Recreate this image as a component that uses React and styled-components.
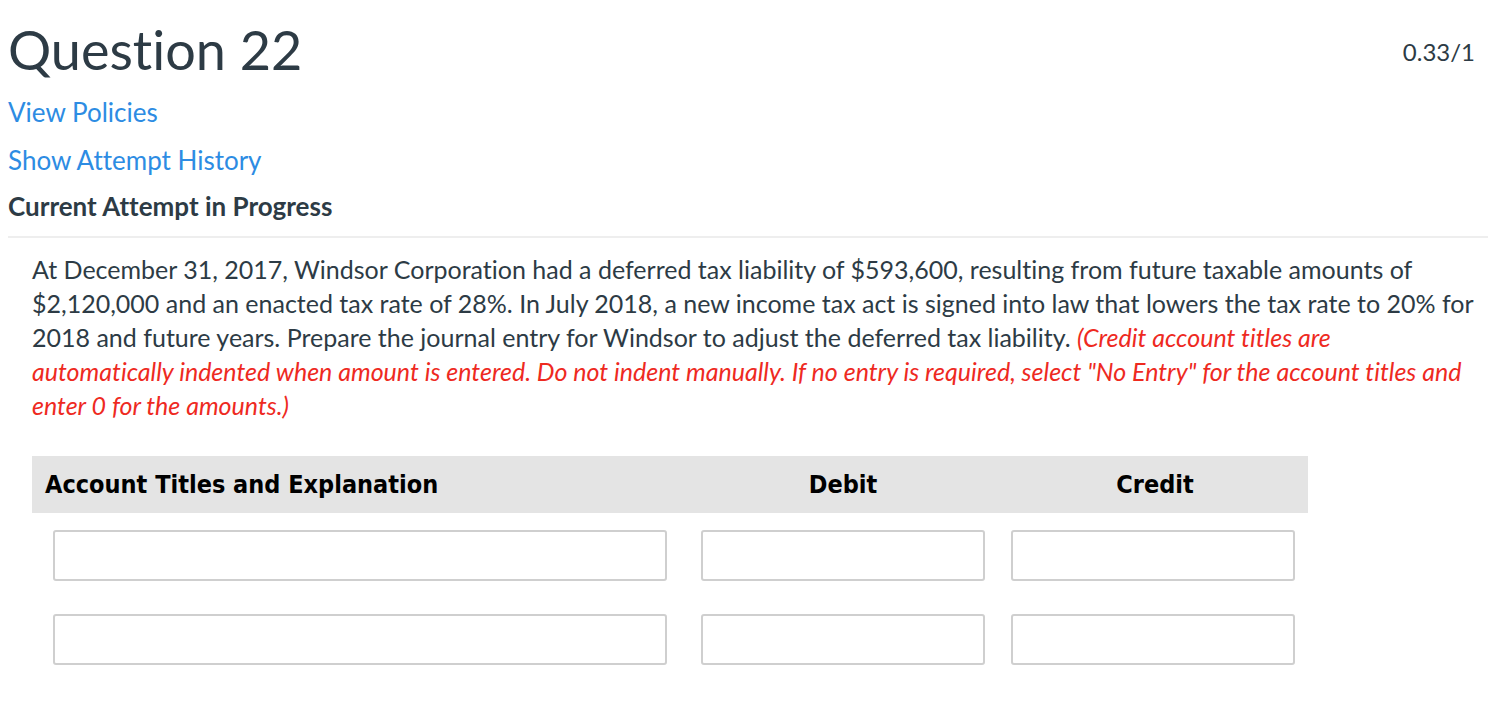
import React from "react"
import styled, { createGlobalStyle } from "styled-components"

const GlobalStyle = createGlobalStyle`
  body {
    margin: 0;
    background: #fff;
    font-family: Lato, "Noto Sans", sans-serif;
    font-variant-ligatures: none;
    color: #2d3b45;
  }
`;

const Page = styled.div`
  padding: 18px 13px 0 8px;
`;

const Header = styled.header`
  display: flex;
  justify-content: space-between;
  align-items: flex-start;
`;

const Title = styled.h1`
  margin: 0;
  font-size: 54px;
  font-weight: 400;
  line-height: 64px;
  color: #2d3b45;
`;

const Score = styled.div`
  font-size: 24px;
  line-height: 28px;
  padding-top: 20px;
  color: #2d3b45;
`;

const LinkList = styled.div`
  display: flex;
  flex-direction: column;
  gap: 17px;
  margin-top: 15px;
`;

const TextLink = styled.a`
  font-size: 26px;
  line-height: 31px;
  color: #2d8ce3;
  text-decoration: none;
  cursor: pointer;
`;

const Status = styled.div`
  margin-top: 15px;
  font-size: 26px;
  font-weight: 700;
  line-height: 30px;
  color: #2d3b45;
`;

const Divider = styled.hr`
  margin: 15px -13px 0 0;
  border: 0;
  border-top: 2px solid #eeeeee;
`;

const Body = styled.section`
  padding: 14px 0 0 24px;
  margin-right: -1px;
`;

const Prompt = styled.p`
  margin: 0;
  font-size: 25px;
  line-height: 34px;
  color: #2d3b45;
`;

const Note = styled.em`
  color: #ee2a1f;
  font-style: italic;
`;

const Journal = styled.div`
  display: grid;
  grid-template-columns: 652px 318px 306px;
  width: 1276px;
  margin-top: 34px;
`;

const HeadCell = styled.div`
  background: #e4e4e4;
  height: 57px;
  display: flex;
  align-items: center;
  justify-content: ${p => (p.$center ? "center" : "flex-start")};
  padding-left: ${p => (p.$center ? "0" : "13px")};
  font-family: "DejaVu Sans Condensed", "DejaVu Sans", sans-serif;
  font-weight: 700;
  font-size: 25px;
  color: #000;
`;

const Cell = styled.div`
  display: flex;
  padding: ${p => (p.$first ? "17px" : "33px")} 0 0 ${p => p.$inset}px;
`;

const Field = styled.input`
  box-sizing: border-box;
  width: ${p => p.$w}px;
  height: 51px;
  border: 2px solid #cfcfcf;
  border-radius: 3px;
  background: #fff;
  font-size: 20px;
  padding: 0 10px;
  outline: none;
`;

const rows = [0, 1];

export default function App() {
  return (
    <>
      <GlobalStyle />
      <Page>
        <Header>
          <Title>Question 22</Title>
          <Score>0.33/1</Score>
        </Header>
        <LinkList>
          <TextLink>View Policies</TextLink>
          <TextLink>Show Attempt History</TextLink>
        </LinkList>
        <Status>Current Attempt in Progress</Status>
        <Divider />
        <Body>
          <Prompt>
            At December 31, 2017, Windsor Corporation had a deferred tax liability of $593,600, resulting from future taxable amounts of $2,120,000 and an enacted tax rate of 28%. In July 2018, a new income tax act is signed into law that lowers the tax rate to 20% for 2018 and future years. Prepare the journal entry for Windsor to adjust the deferred tax liability.{" "}
            <Note>
              (Credit account titles are automatically indented when amount is entered. Do not indent manually. If no entry is required, select "No Entry" for the account titles and enter 0 for the amounts.)
            </Note>
          </Prompt>
          <Journal>
            <HeadCell>Account Titles and Explanation</HeadCell>
            <HeadCell $center>Debit</HeadCell>
            <HeadCell $center>Credit</HeadCell>
            {rows.map(r => (
              <React.Fragment key={r}>
                <Cell $first={r === 0} $inset={21}><Field $w={614} /></Cell>
                <Cell $first={r === 0} $inset={17}><Field $w={284} /></Cell>
                <Cell $first={r === 0} $inset={9}><Field $w={284} /></Cell>
              </React.Fragment>
            ))}
          </Journal>
        </Body>
      </Page>
    </>
  )
}
